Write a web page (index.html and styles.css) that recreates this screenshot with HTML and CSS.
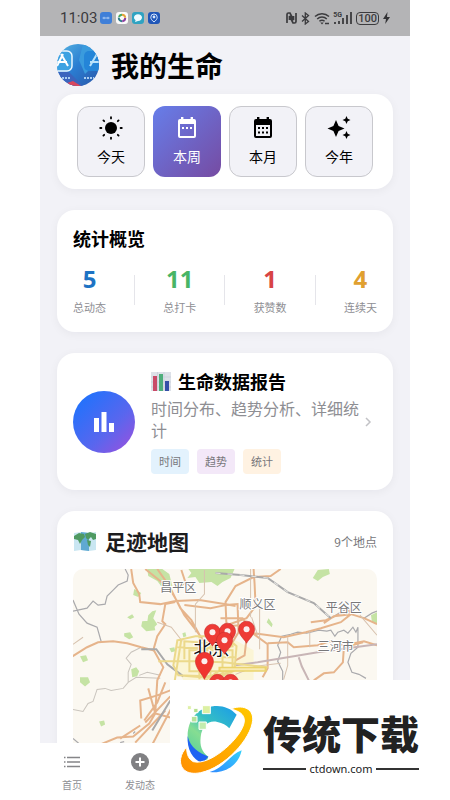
FILE: index.html
```html
<!DOCTYPE html>
<html lang="zh-CN">
<head>
<meta charset="utf-8">
<meta name="viewport" content="width=device-width, initial-scale=1">
<title>我的生命</title>
<link rel="stylesheet" href="styles.css">
</head>
<body>
<div class="phone">
  <div class="status">
    <span class="clock">11:03</span>
    <div class="status-apps">
      <svg viewBox="0 0 12 12"><rect width="12" height="12" rx="3" fill="#3f7fd8"/><path d="M2.5 6h7M4 4.8v2.4M8 4.800v2.400" stroke="#a9c9f2"/></svg>
      <svg viewBox="0 0 12 12"><rect width="12" height="12" rx="3" fill="#fafafa"/><g fill="none" stroke-width="2"><path d="M3 5a3.200 3.200 0 0 1 3-2.200" stroke="#4aa860"/><path d="M6 2.800a3.200 3.200 0 0 1 3.200 3" stroke="#e4a33a"/><path d="M9.200 6a3.200 3.200 0 0 1-3 3.200" stroke="#8b3fa0"/><path d="M6 9.200a3.200 3.200 0 0 1-3.200-3.500" stroke="#2f7b8a"/></g></svg>
      <svg viewBox="0 0 12 12"><rect width="12" height="12" rx="3" fill="#2fa3c2"/><path d="M6 2.300c2.300 0 4 1.400 4 3.300S8.300 9 6 9l-3 1 .6-1.800C2.600 7.600 2 6.700 2 5.600c0-1.900 1.700-3.300 4-3.300z" fill="#effbff"/></svg>
      <svg viewBox="0 0 12 12"><rect width="12" height="12" rx="3" fill="#1f56b8"/><path d="M6 10C4 8.500 2.800 7 2.800 5.200a3.200 3.200 0 0 1 6.400 0C9.200 7 8 8.500 6 10z" fill="none" stroke="#d8e8ff"/><circle cx="6" cy="5" r="1.400" fill="#d8e8ff"/></svg>
    </div>
    <div class="status-system">
      <svg width="11" height="12" viewBox="0 0 11 12"><path d="M1 11V2.500Q1 1 2.500 1H4l3.500 7V4M10 1v8.500Q10 11 8.500 11H7L3.500 4v4" fill="none" stroke="#3b3b3e" stroke-width="1.700"/></svg>
      <svg width="9" height="13" viewBox="0 0 9 13"><path d="M1 3.500l6.500 6-3.200 2.500V1l3.200 2.500-6.500 6" fill="none" stroke="#3b3b3e" stroke-width="1.300"/></svg>
      <svg width="16" height="13" viewBox="0 0 16 13"><g fill="none" stroke="#3b3b3e" stroke-width="1.500"><path d="M1 4.500a10 10 0 0 1 14 0M3.200 7a7 7 0 0 1 9.600 0M5.400 9.300a4 4 0 0 1 5.200 0"/></g><path d="M6.300 10.500L8 12.500l1.700-2z" fill="#3b3b3e"/><path d="M11 11.500h4" stroke="#3b3b3e" stroke-width="1.500"/></svg>
      <span class="signal"><span class="net">5G</span><svg width="18" height="12" viewBox="0 0 18 12"><path d="M1 10v2M5 9v3M9 6v6M13 3v9M17 0v12" stroke="#3b3b3e" stroke-width="1.800"/></svg></span>
      <span class="battery">100</span>
      <svg width="7" height="12" viewBox="0 0 7 12"><path d="M4.500 0L0 7h3l-.8 5L7 5H4z" fill="#333336"/></svg>
    </div>
  </div>

  <main class="content">
    <header class="page-header">
      <svg class="avatar" viewBox="0 0 42 42" role="img" aria-label="头像">
        <defs>
          <linearGradient id="avatarBg" x1="0" y1="0" x2="1" y2="1"><stop offset="0" stop-color="#58b6e2"/><stop offset=".5" stop-color="#2a7dd2"/><stop offset="1" stop-color="#2b57a8"/></linearGradient>
          <clipPath id="avatarClip"><circle cx="21" cy="21" r="21"/></clipPath>
        </defs>
        <g clip-path="url(#avatarClip)">
          <rect width="42" height="42" fill="url(#avatarBg)"/>
          <path d="M26 0h16v16L28 30 22 16z" fill="#3a9bdd"/>
          <path d="M0 28l12 0 14 14H0z" fill="#3b64bd"/>
          <path d="M10 39l6-2 8 5H10z" fill="#d8475e"/>
          <rect x="-6" y="7" width="21" height="20" rx="5" fill="#3da2e2" stroke="#e9f6ff" stroke-width="1.500"/>
          <path d="M6 10L0 22M4 10l7 12M0 18h10" stroke="#fff" stroke-width="2" fill="none"/>
          <rect x="27" y="7" width="20" height="20" rx="5" fill="#2485d8"/>
          <path d="M40 10l-7 12M33 18h10" stroke="#b8e2fb" stroke-width="2" fill="none"/>
          <path d="M5 34h8M27 34h10" stroke="#a9cdf1" stroke-width="2" stroke-dasharray="2 1"/>
        </g>
      </svg>
      <h1>我的生命</h1>
    </header>

    <section class="card periods">
      <button type="button" class="period">
        <svg viewBox="0 0 24 24"><circle cx="12" cy="12" r="6"/><g stroke="currentColor" stroke-width="1.800" stroke-linecap="round"><path d="M12 1.200v1.200M12 21.600v1.200M1.200 12h1.200M21.600 12h1.200M4.400 4.400l.8.8M18.800 18.800l.8.8M4.400 19.600l.8-.8M18.800 5.200l.8-.8"/></g></svg>
        今天
      </button>
      <button type="button" class="period period-active" aria-pressed="true">
        <svg viewBox="0 0 24 24"><path fill-rule="evenodd" d="M6 1h2.400v2h7.200V1H18v2h1a2 2 0 0 1 2 2v15a2 2 0 0 1-2 2H5a2 2 0 0 1-2-2V5a2 2 0 0 1 2-2h1zM5 8v12h14V8z"/><path d="M7 11h2v2H7zM11 11h2v2h-2zM15 11h2v2h-2z"/></svg>
        本周
      </button>
      <button type="button" class="period">
        <svg viewBox="0 0 24 24"><path fill-rule="evenodd" d="M6 1h2.400v2h7.200V1H18v2h1a2 2 0 0 1 2 2v15a2 2 0 0 1-2 2H5a2 2 0 0 1-2-2V5a2 2 0 0 1 2-2h1zM5 9v11h14V9z"/><path d="M7 11h2v2H7zM11 11h2v2h-2zM15 11h2v2h-2zM7 15.500h2v2H7zM11 15.500h2v2h-2zM15 15.500h2v2h-2z"/></svg>
        本月
      </button>
      <button type="button" class="period">
        <svg viewBox="0 0 24 24"><path d="M9 4l2.600 5.900L17.500 12.500l-5.900 2.600L9 21l-2.600-5.900L.5 12.500l5.900-2.600zM19.500 0l1.200 2.800 2.800 1.200-2.800 1.200-1.200 2.800-1.200-2.800L15.500 4l2.800-1.200zM19.500 15l1.200 2.800 2.800 1.200-2.800 1.200-1.200 2.800-1.200-2.800-2.800-1.200 2.800-1.200z"/></svg>
        今年
      </button>
    </section>

    <section class="card overview">
      <h2>统计概览</h2>
      <div class="stats">
        <div class="stat"><strong class="blue">5</strong><span>总动态</span></div>
        <i class="divider"></i>
        <div class="stat"><strong class="green">11</strong><span>总打卡</span></div>
        <i class="divider"></i>
        <div class="stat"><strong class="red">1</strong><span>获赞数</span></div>
        <i class="divider"></i>
        <div class="stat"><strong class="amber">4</strong><span>连续天</span></div>
      </div>
    </section>

    <section class="card report">
      <div class="report-icon"><svg viewBox="0 0 20 20"><path d="M0 6h5v14H0zM7.500 0h5v20h-5zM15 11h5v9h-5z" fill="#fff"/></svg></div>
      <div class="report-body">
        <h2>
          <svg viewBox="0 0 20 20"><rect y="1" width="20" height="19" fill="#dde1e8"/><path d="M0 6h20M0 11h20M0 16h20M6.500 1v19M13 1v19" stroke="#cdd3dd"/><path d="M2 5h4v15H2z" fill="#c94a68"/><path d="M8 3h4v17H8z" fill="#4fae7c"/><path d="M14 10h4v10h-4z" fill="#3550a8"/></svg>
          生命数据报告
        </h2>
        <p>时间分布、趋势分析、详细统计</p>
        <div class="tags"><span class="tag tag-blue">时间</span><span class="tag tag-purple">趋势</span><span class="tag tag-orange">统计</span></div>
      </div>
      <svg class="chevron" viewBox="0 0 16 16"><path d="M5 4l4 4-4 4" fill="none" stroke="#c2c2c6" stroke-width="1.500"/></svg>
    </section>

    <section class="card places">
      <div class="places-head">
        <svg viewBox="0 0 22 20"><path d="M0 2l7-1 8 1 7-1v18l-7 1-8-1-7 1z" fill="#c9e6f2"/><path d="M7 1l8 1v18l-8-1z" fill="#5fa9d2"/><path d="M0 5l5-3 5 1 1 3-3 3-2 4-2-4-4-1zM11 3l5-2 6 2v5l-3 1-2-3-3 3-2-2zM13 9l4 1-1 6-2-2z" fill="#4f9a62"/></svg>
        <h2>足迹地图</h2>
        <span>9个地点</span>
      </div>
      <svg class="map" viewBox="73 569 303 220" preserveAspectRatio="xMidYMin slice" role="img" aria-label="北京足迹地图">
        <defs>
          <g id="pin"><path d="M0 14C-2 10-8 6-8 0A8 8 0 0 1 8 0C8 6 2 10 0 14z" fill="#ee3b36" stroke="#c92f2f" stroke-width=".6"/><circle r="3" fill="#fbeeee"/></g>
          <g id="pinLarge"><path d="M0 18C-2 13-9 7-9 0A9 9 0 0 1 9 0C9 7 2 13 0 18z" fill="#f0352f" stroke="#c92f2f" stroke-width=".6"/><circle r="3" fill="#fbeeee"/></g>
        </defs>
        <rect x="73" y="569" width="303" height="220" fill="#fbf8f1"/>
        <g fill="#c5e3a4">
          <path d="M188 569h46l-4 9-8 4-5 4-6-4-12 1-4-6-8 1 4-5z"/>
          <path d="M147 569h15l7 5 3 12-9 3-6-8-9-5z"/>
          <path d="M152 611l4-1-3 8 4 6-3 3-7-5 1-7zM127 617l5-3 2 3-4 2zM134 589l7 4-3 4-5-2zM312 578l5-8 11-1 1 5-7 3-5 4zM142 621l11-1 2 10-9 1-5-5zM124 633l6-1 3 5-4 2-5-3zM80 656l6-1 2 5-5 2zM80 677h8l2 5-5 4-5-4zM131 669l5-2 3 4-2 5-5 1zM99 721l5-1 1 4-4 2zM370 615l6-3v12l-5-2zM169 648l5-1 1 4-4 1zM182 633l3-1 1 4-3 1zM268 618l4 6-1 3-5-5z"/>
        </g>
        <path d="M177 640h58l18 10v30h-70l-10-18z" fill="#fbf5d6"/>
        <g fill="none" stroke="#aaaaad" stroke-width="1.200">
          <path d="M73 611l14-3 6-7 5 4 7-1 2-8 6-6 5-5 9-4 1-6-3-6M73 600l6 14 8 9 10 4 4 14"/>
          <path d="M282 680v-9l-5-10 3-9-3-7 4-9 9-2 7-2 9 1 12-3 8 1 4-1 4 6 3-4 6-2 4 3 5-6 3 5 2-5v20l-7 6-3 9 4 10 7 2 7 4M73 738l6 5M120 742l4-1M133 733l2-2M330 618l10-6 8-4M363 618l8-5 5-2"/>
        </g>
        <path d="M73 709l10 2 5-8 5-2 4-12 8-1 6 2 12-2 5-6 8-5 24 1M128 682v-10l3-8-5-6 5-6 10-5M139 675l8-3 13 3" fill="none" stroke="#c9c4bd"/>
        <g fill="none" stroke="#e6b48b" stroke-width="2">
          <path d="M131 569l2 14 6 11 1 8 20 2 15-3 24-1 25 4 11 2M145 569l15 12 9 7 7 12 8 15 10 13 12 16M157 569l12 17 11 22 11 12 11 20M175 602l-10 2-3 17 3 3-8 12-4 14-12-3-14-4-14-2-15 1-11 5-16 10"/>
          <path d="M153 649l10 18-6 13-2 33-6 10-16 13-16 1-17 7M141 718l-1-18 17-5 13-5M120 738l20-13M165 682l-8 20-13 18M170 696l-25 26M148 688l7 25 15 4M135 742l30-32M173 704l-21 40"/>
          <path d="M181 570l4 12-6 5M280 569l-10 7-17 1-18 9-10 16 1 24 14-1 12 8 15 11v24l-5 9M253 569l1 15 1 22-9 12-17 6M225 605l12-1 1 28-9 15M220 618h22l11 15 30 4 22-5 15-4 20-6 10-8-2-4-23 10-15 2M246 638l-2 17-9 5M267 643l20-1 6 5 24-2 12-4 14 4 20-4 13 4M323 623l10-7 17-2 13 4 13 6M313 680l10-7 10-1 9-10 1-15 19-5M184 605l26 3 15-3"/>
        </g>
        <g fill="none" stroke="#d7c2af">
          <path d="M250 569v48M251 617l6 18M259 607v42M235 674l20-8 25-3M287 637v28l-4 14M309 630v17M204 570v24l-9 10v28M73 644l10-7M359 615l17 20M157 622l14 5 11 14"/>
        </g>
        <path d="M215 573l25 2 27 3 20 14 26 11 17 15M141 649l15 0 11 15 16 12M170 700l-18 30" fill="none" stroke="#a9a9aa" stroke-width="2"/>
        <path d="M215 573l25 2 27 3 20 14 26 11 17 15" fill="none" stroke="#e4e4e1" stroke-dasharray="5 7"/>
        <path d="M235 665l22-3 60-10 59-8M298 657l3 9 7 14" fill="none" stroke="#c8b5b6" stroke-width="2"/>
        <g fill="none" stroke="#ecd98b" stroke-width="2">
          <path d="M158 661h37l28 1 44 5M173 665l4-25 18-4h30l11 10-2 24-18 8-38-3zM184 659v-18l25 2 24 2M189 650h43v21h-43zM181 639l-7 44M199 636v43M210 638v45M222 640v40M177 647l28 1 28-2M218 657h16M221 669l-18 12M177 675l30 1 25-4"/>
        </g>
        <path d="M218 669h48" stroke="#ead36c" stroke-width="5"/>
        <path d="M220 669h44" stroke="#f8eab0" stroke-width="2"/>
        <g class="map-labels">
          <text x="160" y="592">昌平区</text><text x="239" y="609">顺义区</text><text x="325" y="612">平谷区</text><text x="317" y="651">三河市</text>
        </g>
        <text class="map-city" x="193" y="655">北京</text>
        <use href="#pin" x="212" y="632"/><use href="#pin" x="227" y="631"/><use href="#pin" x="224" y="640"/><use href="#pin" x="246" y="629"/><use href="#pinLarge" x="204" y="661"/><use href="#pin" x="217" y="682"/><use href="#pin" x="230" y="682"/>
      </svg>
    </section>
  </main>

  <nav class="tabbar">
    <a href="#" class="tab"><svg viewBox="0 0 20 20"><path d="M5 5.500h13M5 10h13M5 14.500h13M2 5.500h1.500M2 10h1.500M2 14.500h1.500" stroke="#858588" stroke-width="1.600"/></svg>首页</a>
    <a href="#" class="tab"><svg viewBox="0 0 20 20"><circle cx="10" cy="10" r="9" fill="#808083"/><path d="M10 5.500v9M5.500 10h9" stroke="#fff" stroke-width="2"/></svg>发动态</a>
  </nav>
</div>

<aside class="download">
  <svg class="download-logo" viewBox="60 105 225 210" aria-hidden="true">
    <defs>
      <linearGradient id="cGrad" x1=".9" y1="0" x2=".2" y2="1"><stop offset="0" stop-color="#1d9fe6"/><stop offset=".4" stop-color="#35bfc4"/><stop offset=".65" stop-color="#86dd92"/><stop offset="1" stop-color="#55cf9c"/></linearGradient>
      <linearGradient id="ringGrad" x1="1" y1="0" x2="0" y2="1"><stop offset="0" stop-color="#ffc800"/><stop offset="1" stop-color="#ff8f00"/></linearGradient>
      <linearGradient id="tailGrad" x1="1" y1="0" x2="0" y2="1"><stop offset="0" stop-color="#35d0fa"/><stop offset="1" stop-color="#2f8bff"/></linearGradient>
    </defs>
    <path d="M230 134C212 114 188 106 164 108 112 112 83 150 83 198c0 40 22 74 56 80l6-18c-20-14-26-34-23-58 4-36 24-52 50-46 16 3 26 8 36 19z" fill="url(#cGrad)"/>
    <path d="M83 198c8 36 34 50 62 62l-18 20C98 268 80 238 83 198z" fill="#1f63f2"/>
    <path d="M245 241c-8 42-48 72-96 65 42-10 60-52 96-65z" fill="url(#tailGrad)"/>
    <path d="M213 117c30-14 68-4 65 34-5 56-84 142-156 157-44 9-64-14-60-42 2-14 10-26 18-34 0 22 6 36 20 43 54 14 151-78 153-122 1-20-16-30-40-36z" fill="url(#ringGrad)" stroke="#fff" stroke-width="3"/>
    <g stroke="#fff" stroke-width="3"><path d="M82 107h12v12H82z" fill="#dff0a8"/><path d="M101 115h13v13h-13z" fill="#b5e08d"/><path d="M127 107h24v24h-24z" fill="#dcf0a2"/><path d="M94 139h17v17H94z" fill="#b5e39b"/><path d="M117 156h22v22h-22z" fill="#c3ecae"/></g>
  </svg>
  <div class="download-text">
    <strong>传统下载</strong>
    <span>ctdown.com</span>
  </div>
</aside>
</body>
</html>
```
FILE: styles.css
```css
* { box-sizing: border-box; }

body {
  margin: 0;
  background: #fff;
  color: #000;
  font-family: "Noto Sans CJK SC", sans-serif;
}

h1, h2, p { margin: 0; }

.phone {
  display: flex;
  flex-direction: column;
  height: 100vh;
  margin: 0 40px;
  background: #f2f2f7;
}

.status {
  display: flex;
  flex: none;
  align-items: center;
  height: 36px;
  padding: 0 20px;
  background: #b4b4b6;
  color: #3b3b3e;
}

.clock {
  font: 15px/20px Roboto, sans-serif;
}

.status-apps {
  display: flex;
  gap: 4px;
  margin-left: 3px;
}

.status-apps svg { width: 12px; height: 12px; }

.status-system {
  display: flex;
  align-items: center;
  gap: 4px;
  margin-left: auto;
}

.signal {
  position: relative;
  display: flex;
  align-items: center;
}

.net {
  position: absolute;
  top: -1px;
  left: -1px;
  font: 700 7px/8px Roboto, sans-serif;
}

.battery {
  padding: 0 1px;
  border: 1px solid #3b3b3e;
  border-radius: 4px;
  font: 500 11px/11px Roboto, sans-serif;
}

.content {
  display: flex;
  flex: 1;
  flex-direction: column;
  gap: 21px;
  min-height: 0;
  overflow: hidden;
  padding: 0 17px;
}

.page-header {
  display: flex;
  flex: none;
  align-items: center;
  gap: 12px;
  height: 58px;
  margin-bottom: -21px;
}

.avatar { width: 42px; height: 42px; }

h1 {
  font-size: 28px;
  font-weight: 700;
  line-height: 40px;
}

.card {
  flex: none;
  padding: 16px;
  border-radius: 18px;
  background: #fff;
  box-shadow: 0 2px 10px rgba(0, 0, 40, 0.05);
}

.card h2 {
  font-size: 18px;
  font-weight: 700;
  line-height: 24px;
}

.card.periods {
  display: grid;
  grid-template-columns: repeat(4, 1fr);
  gap: 8px;
  padding: 12px 20px;
}

.period {
  display: flex;
  flex-direction: column;
  align-items: center;
  gap: 6px;
  height: 71px;
  padding: 9px 0 0;
  border: 1px solid #c8c8cd;
  border-radius: 12px;
  background: #f2f2f7;
  color: #000;
  font: 400 14px/20px "Noto Sans CJK SC", sans-serif;
}

.period svg { width: 24px; height: 24px; fill: currentColor; }

.period-active {
  border-color: transparent;
  background: linear-gradient(135deg, #667eea, #764ba2) border-box;
  color: #fff;
}

.stats {
  display: flex;
  align-items: center;
  justify-content: space-between;
  margin-top: 14px;
}

.stat {
  display: flex;
  flex-direction: column;
  align-items: center;
  gap: 4px;
}

.stat strong {
  font: 700 24px/30px "Noto Sans", sans-serif;
}

.stat span {
  color: #8e8e93;
  font-size: 11px;
  line-height: 18px;
}

.blue { color: #1d73c4; }
.green { color: #48b566; }
.red { color: #d84444; }
.amber { color: #e0a030; }

.divider { width: 1px; height: 30px; background: #e5e5ea; }

.report { display: flex; align-items: center; }

.report-icon {
  display: grid;
  flex: none;
  place-items: center;
  width: 62px;
  height: 62px;
  margin-right: 16px;
  border-radius: 50%;
  background: linear-gradient(135deg, #1475ff, #5966ee 60%, #a04fdc);
}

.report-icon svg { width: 20px; height: 20px; }

.report-body { flex: 1; }

.report h2 { display: flex; align-items: center; gap: 7px; }

.report h2 svg { width: 20px; height: 20px; }

.report p {
  margin: 4px 0 8px;
  color: #8e8e93;
  font-size: 16px;
  line-height: 22px;
}

.tags { display: flex; gap: 8px; }

.tag {
  padding: 0 8px;
  border-radius: 4px;
  color: #77777b;
  font-size: 11px;
  line-height: 25px;
}

.tag-blue { background: #e3f2fd; }
.tag-purple { background: #f3e8f8; }
.tag-orange { background: #fff2e2; }

.chevron { flex: none; width: 16px; height: 16px; }

.places-head {
  display: flex;
  align-items: center;
  gap: 8px;
  margin-bottom: 14px;
}

.places-head svg { width: 24px; height: 20px; }

.places-head h2 { color: #1c1c1e; font-size: 21px; line-height: 28px; }

.places-head span {
  margin-left: auto;
  color: #77777b;
  font-size: 12px;
}

.map {
  display: block;
  width: 100%;
  height: 220px;
  border-radius: 10px;
}

.map text { paint-order: stroke; stroke: #fff; stroke-width: 2px; }
.map-labels { fill: #78787a; font-size: 12px; }
.map-city { fill: #111; font-size: 18px; }

.tabbar {
  display: flex;
  flex: none;
  gap: 8px;
  height: 57px;
  padding: 9px 2px 0;
  background: #fff;
}

.tab {
  display: flex;
  flex-direction: column;
  align-items: center;
  gap: 5px;
  width: 60px;
  color: #8e8e93;
  font-size: 10px;
  line-height: 16px;
  text-decoration: none;
}

.tab svg { width: 20px; height: 20px; }

.download {
  position: fixed;
  right: 0;
  bottom: 0;
  display: flex;
  gap: 8px;
  width: 280px;
  height: 120px;
  padding: 25px 10px 0;
  background: #fff;
}

.download-logo { width: 75px; height: 70px; }

.download-text { color: #222; }

.download-text strong {
  display: block;
  font-size: 39px;
  font-weight: 900;
  line-height: 54px;
}

.download-text span {
  display: flex;
  align-items: center;
  gap: 3px;
  font: 400 11px/20px "Noto Sans", sans-serif;
}

.download-text span::before,
.download-text span::after {
  content: "";
  flex: 1;
  height: 2px;
  background: #333;
}
```
